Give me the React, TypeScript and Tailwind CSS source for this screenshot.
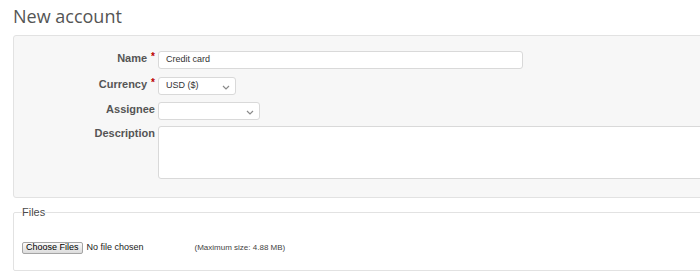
const label = "font-['Liberation_Sans',Arial,sans-serif] text-[11px] leading-[13px] font-bold text-[#555] w-[144px] text-right pt-[1px] pr-[3px] shrink-0"

function Req() {
  return <span className="text-[#bb0000] ml-[4px] relative top-[-2px] text-[10px]">*</span>
}

function Chevron() {
  return (
    <svg width="8" height="5" viewBox="0 0 8 5" className="absolute right-[5px] top-[7px]">
      <path d="M1 1l3 3 3-3" fill="none" stroke="#8a8a8a" strokeWidth="1.2" />
    </svg>
  )
}

export default function App() {
  return (
    <div className="w-[700px] h-[278px] overflow-hidden bg-white font-['Liberation_Sans',Arial,sans-serif]">
      <div className="w-[760px] pl-[13px]">
        <h2 className="font-['Open_Sans',sans-serif] text-[18px] leading-[24px] text-[#555] mt-[4px] mb-[7px]">
          New account
        </h2>

        <div className="bg-[#f7f7f7] border border-[#e2e2e2] rounded-[3px] pt-[15px] pb-[18px]">
          <div className="flex items-start">
            <div className={label}>
              Name<Req />
            </div>
            <div className="w-[365px] h-[18px] bg-white border border-[#d9d9d9] rounded-[3px] pl-[7px] flex items-center text-[9px] text-[#333]">
              Credit card
            </div>
          </div>

          <div className="flex items-start mt-[8px]">
            <div className={label}>
              Currency<Req />
            </div>
            <div className="relative w-[78px] h-[18px] bg-white border border-[#d9d9d9] rounded-[3px] pl-[7px] flex items-center text-[9px] text-[#333]">
              USD ($)
              <Chevron />
            </div>
          </div>

          <div className="flex items-start mt-[7px]">
            <div className={label}>Assignee</div>
            <div className="relative w-[102px] h-[18px] bg-white border border-[#d9d9d9] rounded-[3px]">
              <Chevron />
            </div>
          </div>

          <div className="flex items-start mt-[6px]">
            <div className={label}>Description</div>
            <div className="w-[580px] h-[53px] bg-white border border-[#d9d9d9] rounded-[3px]" />
          </div>
        </div>

        <fieldset className="mt-[8px] border border-[#e2e2e2] rounded-[2px] px-[8px] pt-[22px] pb-[15px]">
          <legend className="text-[11px] leading-[13px] text-[#4a4a4a]">Files</legend>
          <div className="flex items-center">
            <span className="h-[12px] px-[3px] flex items-center text-[9px] leading-none text-black border border-[#a5a5a5] rounded-[2px] bg-gradient-to-b from-[#fbfbfb] to-[#dcdcdc]">
              Choose Files
            </span>
            <span className="ml-[4px] text-[9px] text-[#222] w-[108px]">No file chosen</span>
            <span className="text-[8px] text-[#444]">(Maximum size: 4.88 MB)</span>
          </div>
        </fieldset>
      </div>
    </div>
  )
}
